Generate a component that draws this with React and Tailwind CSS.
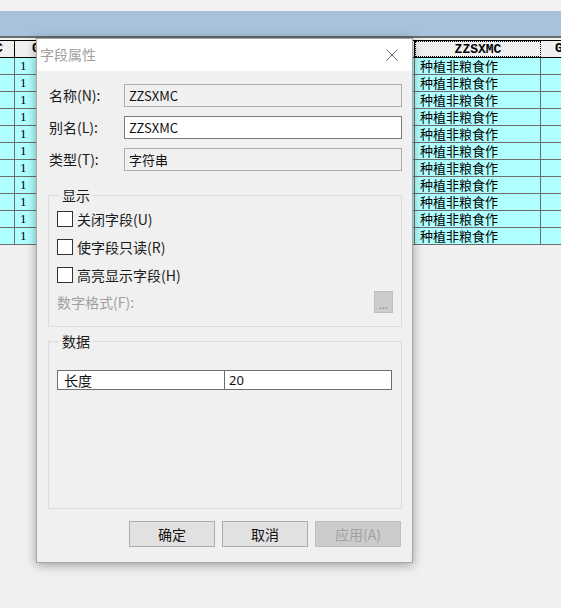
import React from "react";

const cjk = { fontFamily: '"Noto Sans CJK SC", "Noto Sans", sans-serif' };
const mono = { fontFamily: '"Liberation Mono", "Noto Sans CJK SC", monospace' };

const ROWS = Array.from({ length: 11 });

function GridBack() {
  return (
    <div className="flex flex-col">
      <div className="flex h-[18px] border-y border-black bg-[#f0f0f0] text-[13px] font-bold leading-[16px]" style={mono}>
        <div className="w-[15px] shrink-0 border-r border-black overflow-hidden">
          <span className="-ml-[5px]">C</span>
        </div>
        <div className="w-[400px] shrink-0 border-r border-black pl-[17px]">G</div>
        <div className="w-[126px] shrink-0 border border-dotted border-black text-center">ZZSXMC</div>
        <div className="flex-1 pl-[14px] whitespace-nowrap">G</div>
      </div>
      {ROWS.map((_, i) => (
        <div key={i} className="flex h-[17px] border-b border-[#6d6d6d] bg-[#b0ffff] text-[13px] leading-[16px]" style={cjk}>
          <div className="w-[15px] shrink-0 border-r border-[#6d6d6d]" />
          <div className="w-[400px] shrink-0 border-r border-[#6d6d6d] pl-[5px]" style={{ fontFamily: '"Liberation Serif", serif' }}>
            1
          </div>
          <div className="w-[126px] shrink-0 border-r border-[#6d6d6d] pl-[5px]">种植非粮食作</div>
          <div className="flex-1" />
        </div>
      ))}
    </div>
  );
}

function Field({ label, k, value, enabled }) {
  return (
    <div className="flex items-center h-[23px]">
      <div className="w-[76px] pl-[1px] text-[14px] text-[#1a1a1a]">
        {label}({k}):
      </div>
      <div
        className={
          "flex-1 h-[23px] flex items-center px-[4px] text-[13px] text-[#111] border " +
          (enabled ? "bg-white border-[#7a7a7a]" : "bg-[#f0f0f0] border-[#adadad]")
        }
      >
        {value}
      </div>
    </div>
  );
}

function Check({ label, k }) {
  return (
    <div className="flex items-center h-[16px]">
      <div className="w-[16px] h-[16px] bg-white border border-[#333]" />
      <span className="ml-[4px] text-[14px] text-[#1a1a1a]">
        {label}({k})
      </span>
    </div>
  );
}

function Group({ title, className, children }) {
  return (
    <div className={"relative border border-[#dcdcdc] " + className}>
      <span className="absolute -top-[11px] left-[10px] px-[3px] bg-[#f0f0f0] text-[14px] leading-[20px] text-[#1a1a1a]">
        {title}
      </span>
      {children}
    </div>
  );
}

function Dialog() {
  return (
    <div
      className="absolute left-[36px] top-[38px] w-[377px] h-[525px] bg-[#f0f0f0] border border-[#a6a6a6] shadow-[0_2px_10px_rgba(0,0,0,0.35)] flex flex-col"
      style={cjk}
    >
      <div className="h-[32px] bg-white flex items-center justify-between pl-[3px] pr-[14px]">
        <span className="text-[14px] text-[#a0a0a0] -mt-[1px]">字段属性</span>
        <svg width="12" height="12" viewBox="0 0 12 12">
          <path d="M0.5 0.5 L11.5 11.5 M11.5 0.5 L0.5 11.5" stroke="#707070" strokeWidth="1" />
        </svg>
      </div>
      <div className="flex flex-col pl-[11px] pr-[10px]">
        <div className="mt-[13px] flex flex-col gap-[9px]">
          <Field label="名称" k="N" value="ZZSXMC" />
          <Field label="别名" k="L" value="ZZSXMC" enabled />
          <Field label="类型" k="T" value="字符串" />
        </div>
        <Group title="显示" className="mt-[24px] h-[132px] pl-[8px] pr-[8px] pt-[15px]">
          <div className="flex flex-col gap-[12px]">
            <Check label="关闭字段" k="U" />
            <Check label="使字段只读" k="R" />
            <Check label="高亮显示字段" k="H" />
          </div>
          <div className="mt-[8px] flex items-center justify-between">
            <span className="text-[14px] text-[#a0a0a0]">数字格式(F):</span>
            <div className="w-[19px] h-[22px] bg-[#cccccc] border border-[#bfbfbf] flex items-end justify-center pb-[2px] text-[11px] leading-none text-[#8a8a8a]">
              ...
            </div>
          </div>
        </Group>
        <Group title="数据" className="mt-[14px] h-[168px] pl-[8px] pr-[9px] pt-[28px]">
          <div className="flex h-[20px] bg-white border border-[#6e6e6e] text-[14px] leading-[18px]">
            <div className="w-[167px] border-r border-[#6e6e6e] pl-[6px] text-[#111]">长度</div>
            <div className="flex-1 pl-[4px] text-[13px] text-[#111]" style={{ fontFamily: '"Noto Sans", sans-serif' }}>
              20
            </div>
          </div>
        </Group>
        <div className="mt-[12px] flex justify-end gap-[7px] pr-[1px]">
          <button className="w-[86px] h-[26px] bg-[#e1e1e1] border border-[#adadad] text-[14px] text-[#111]">确定</button>
          <button className="w-[86px] h-[26px] bg-[#e1e1e1] border border-[#adadad] text-[14px] text-[#111]">取消</button>
          <button className="w-[86px] h-[26px] bg-[#cccccc] border border-[#bfbfbf] text-[14px] text-[#a0a0a0]">应用(A)</button>
        </div>
      </div>
    </div>
  );
}

export default function App() {
  return (
    <div className="relative w-[561px] h-[608px] overflow-hidden bg-[#f0f0f0]">
      <div className="h-[11px] bg-[#f2f2f2]" />
      <div className="h-[25px] bg-[#a8c2dd]" />
      <div className="h-[2px] bg-[#6a6a6a]" />
      <div className="h-[2px] bg-[#f0f0f0]" />
      <GridBack />
      <Dialog />
    </div>
  );
}
